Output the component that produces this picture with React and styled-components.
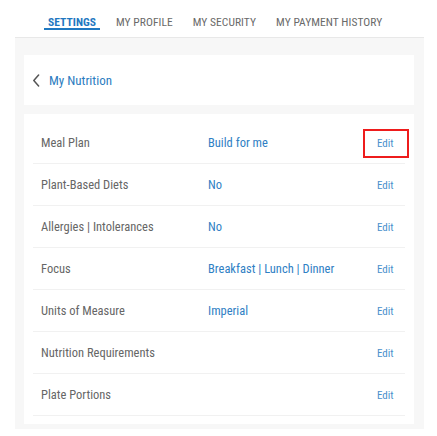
import React from "react";
import styled, { createGlobalStyle } from "styled-components";

const Global = createGlobalStyle`
  html, body { margin: 0; padding: 0; background: #ffffff; }
  body { font-family: "Liberation Sans Narrow", "Roboto Condensed", Roboto, sans-serif; }
  * { box-sizing: border-box; }
`;

const Page = styled.div`
  padding: 0 13px 0 15px;
  width: 437px;
`;

const TabBar = styled.nav`
  display: flex;
  align-items: flex-end;
  gap: 12px;
  height: 38px;
  padding-left: 29px;
  border-bottom: 1px solid #e8e8e8;
`;

const Tab = styled.a`
  display: block;
  padding: 0 4px;
  font-size: 11.5px;
  line-height: 12px;
  letter-spacing: 0.05px;
  text-transform: uppercase;
  color: ${(p) => (p.$active ? "#1f78c1" : "#6a6a6a")};
  font-weight: ${(p) => (p.$active ? 700 : 400)};
  border-bottom: 2px solid ${(p) => (p.$active ? "#1f78c1" : "transparent")};
  margin-bottom: 7.5px;
  cursor: pointer;
`;

const Panel = styled.div`
  background: #f7f7f7;
  padding: 17px 10px 5px 9px;
  display: flex;
  flex-direction: column;
  gap: 9px;
`;

const Card = styled.div`
  background: #ffffff;
  padding: ${(p) => p.$pad};
`;

const BackLink = styled.a`
  display: flex;
  align-items: center;
  gap: 9px;
  height: 50px;
  font-size: 13px;
  color: #2b7cc0;
  cursor: pointer;
`;

const Row = styled.div`
  display: grid;
  grid-template-columns: 167px 1fr auto;
  align-items: center;
  height: 42px;
  padding-left: 8px;
  border-bottom: 1px solid #f1f1f1;
`;

const Label = styled.span`
  font-size: 12.5px;
  color: #666666;
`;

const Value = styled.span`
  font-size: 12.5px;
  color: #2f80c4;
`;

const EditLink = styled.a`
  display: flex;
  align-items: center;
  width: 46px;
  height: 29px;
  margin: 2px -4px 0 0;
  padding-left: 12px;
  font-size: 11px;
  color: #4a8fcc;
  border: 2px solid ${(p) => (p.$highlight ? "#ee1c1c" : "transparent")};
  cursor: pointer;
`;

const rows = [
  ["Meal Plan", "Build for me"],
  ["Plant-Based Diets", "No"],
  ["Allergies | Intolerances", "No"],
  ["Focus", "Breakfast | Lunch | Dinner"],
  ["Units of Measure", "Imperial"],
  ["Nutrition Requirements", ""],
  ["Plate Portions", ""],
];

const Chevron = () => (
  <svg width="7" height="13" viewBox="0 0 7 13" fill="none">
    <path d="M5.6 1 L0.8 6.5 L5.6 12" stroke="#555" strokeWidth="1.5" strokeLinecap="round" strokeLinejoin="round" />
  </svg>
);

export default function App() {
  return (
    <Page>
      <Global />
      <TabBar>
        <Tab $active>Settings</Tab>
        <Tab>My Profile</Tab>
        <Tab>My Security</Tab>
        <Tab>My Payment History</Tab>
      </TabBar>
      <Panel>
        <Card $pad="0 9px">
          <BackLink>
            <Chevron />
            My Nutrition
          </BackLink>
        </Card>
        <Card $pad="8px 9px 8px 9px">
          {rows.map(([label, value], i) => (
            <Row key={label}>
              <Label>{label}</Label>
              <Value>{value}</Value>
              <EditLink $highlight={i === 0}>Edit</EditLink>
            </Row>
          ))}
        </Card>
      </Panel>
    </Page>
  );
}
